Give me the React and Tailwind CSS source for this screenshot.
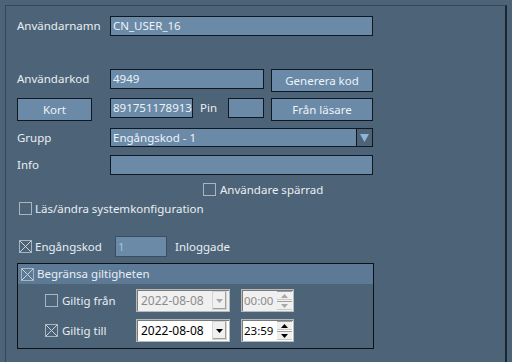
import React from 'react';

const Check = ({ checked }) => (
  <span className="relative block w-[13px] h-[13px] border border-[#a9b5c0] shrink-0">
    {checked && (
      <svg className="absolute inset-0" width="11" height="11" viewBox="0 0 11 11">
        <path d="M0 0L11 11M11 0L0 11" stroke="#c9d3dc" strokeWidth="1" />
      </svg>
    )}
  </span>
);

const Field = ({ className = '', children }) => (
  <div className={`h-[20px] border border-[#111820] bg-[#6a8aa7] text-[#eef3f7] px-[2px] flex items-center leading-none ${className}`}>
    {children}
  </div>
);

const Btn = ({ className = '', children }) => (
  <div className={`h-[23px] border border-[#111820] bg-[#6a8aa7] text-[#eef3f7] flex items-center justify-center leading-none ${className}`}>
    {children}
  </div>
);

const Arrow = ({ color, up }) => (
  <svg width="7" height="4" viewBox="0 0 7 4">
    <path d={up ? 'M3.5 0L7 4H0z' : 'M0 0h7L3.5 4z'} fill={color} />
  </svg>
);

const DatePick = ({ value, disabled }) => (
  <div className={`w-[94px] h-[23px] border border-[#b9b9b9] shadow-[inset_1px_1px_0_#7a7a7a] flex items-center pl-[4px] pr-[2px] ${disabled ? 'bg-[#f0f0f0] text-[#8c8c8c]' : 'bg-white text-black'}`}>
    <span className="flex-1 text-[12px] leading-none">{value}</span>
    <div className="w-[15px] h-[19px] bg-[#f0f0f0] border border-[#d4d4d4] shadow-[inset_-1px_-1px_0_#a0a0a0] flex items-center justify-center">
      <Arrow color={disabled ? '#a8a8a8' : '#000'} />
    </div>
  </div>
);

const TimePick = ({ value, disabled }) => (
  <div className={`w-[53px] h-[23px] border border-[#b9b9b9] shadow-[inset_1px_1px_0_#7a7a7a] flex items-center pl-[2px] pr-[1px] ${disabled ? 'bg-[#f0f0f0] text-[#8c8c8c]' : 'bg-white text-black'}`}>
    <span className="flex-1 text-[11.5px] leading-none">{value}</span>
    <div className="w-[15px] flex flex-col gap-[1px]">
      <div className="h-[9px] bg-[#f0f0f0] border-t border-[#a0a0a0] shadow-[inset_0_-1px_0_#c8c8c8] flex items-center justify-center">
        <Arrow color={disabled ? '#a8a8a8' : '#000'} up />
      </div>
      <div className="h-[9px] bg-[#f0f0f0] border-t border-[#a0a0a0] shadow-[inset_0_-1px_0_#c8c8c8] flex items-center justify-center">
        <Arrow color={disabled ? '#a8a8a8' : '#000'} />
      </div>
    </div>
  </div>
);

export default function App() {
  return (
    <div className="w-[512px] h-[362px] overflow-hidden bg-[#4d6478] pt-[5px] pl-[5px] font-['Noto_Sans',sans-serif] text-[11.5px] text-[#e9eef3]">
      <div className="w-[502px] h-[370px] border-t border-l border-[#34475a] border-r-2 border-r-[#1b2631] pl-[11px] flex flex-col">
        {/* Användarnamn */}
        <div className="mt-[10px] h-[20px] flex items-center">
          <span className="w-[93px]">Användarnamn</span>
          <Field className="w-[263px]">CN_USER_16</Field>
        </div>

        {/* Användarkod */}
        <div className="mt-[33px] h-[23px] flex items-start">
          <span className="w-[93px] h-[20px] flex items-center">Användarkod</span>
          <Field className="w-[154px]">4949</Field>
          <Btn className="ml-[7px] w-[102px]">Generera kod</Btn>
        </div>

        {/* Kort */}
        <div className="mt-[6px] h-[23px] flex items-start">
          <Btn className="w-[75px]">Kort</Btn>
          <Field className="ml-[18px] w-[83px] px-[1px] overflow-hidden">891751178913</Field>
          <span className="ml-[7px] w-[28px] h-[20px] flex items-center">Pin</span>
          <Field className="w-[36px]" />
          <Btn className="ml-[7px] w-[102px]">Från läsare</Btn>
        </div>

        {/* Grupp */}
        <div className="mt-[7px] h-[19px] flex items-center">
          <span className="w-[93px]">Grupp</span>
          <div className="w-[263px] h-[19px] border border-[#111820] bg-[#6a8aa7] flex">
            <span className="flex-1 px-[2px] flex items-center leading-none text-[#eef3f7]">Engångskod - 1</span>
            <div className="w-[16px] border-l border-[#111820] bg-[#4d6478] flex items-center justify-center">
              <svg width="9" height="8" viewBox="0 0 9 8">
                <path d="M0 0h9L4.5 8z" fill="#8fb4d8" />
              </svg>
            </div>
          </div>
        </div>

        {/* Info */}
        <div className="mt-[8px] h-[19px] flex items-center">
          <span className="w-[93px]">Info</span>
          <Field className="w-[263px] h-[19px]" />
        </div>

        {/* Användare spärrad */}
        <div className="mt-[9px] h-[13px] flex items-center pl-[186px] gap-[4px]">
          <Check />
          <span className="leading-none">Användare spärrad</span>
        </div>

        {/* Läs/ändra */}
        <div className="mt-[6px] h-[13px] flex items-center pl-[2px] gap-[3px]">
          <Check />
          <span className="leading-none">Läs/ändra systemkonfiguration</span>
        </div>

        {/* Engångskod */}
        <div className="mt-[21px] h-[21px] flex items-center">
          <div className="w-[98px] flex items-center pl-[2px] gap-[3px]">
            <Check checked />
            <span className="leading-none">Engångskod</span>
          </div>
          <div className="w-[52px] h-[21px] border border-[#3a4e60] bg-[#6a8aa7] text-[#a9c1d6] px-[2px] flex items-center leading-none">1</div>
          <span className="ml-[8px] leading-none">Inloggade</span>
        </div>

        {/* Begränsa giltigheten */}
        <div className="mt-[6px] w-[357px] h-[86px] border border-[#0d1117] flex flex-col">
          <div className="h-[20px] bg-[#5c7a96] flex items-center pl-[3px] gap-[3px]">
            <Check checked />
            <span className="leading-none">Begränsa giltigheten</span>
          </div>
          <div className="mt-[5px] h-[23px] flex items-center">
            <div className="w-[118px] pl-[27px] flex items-center gap-[4px]">
              <Check />
              <span className="leading-none">Giltig från</span>
            </div>
            <DatePick value="2022-08-08" disabled />
            <div className="ml-[11px]">
              <TimePick value="00:00" disabled />
            </div>
          </div>
          <div className="mt-[7px] h-[23px] flex items-center">
            <div className="w-[118px] pl-[27px] flex items-center gap-[4px]">
              <Check checked />
              <span className="leading-none">Giltig till</span>
            </div>
            <DatePick value="2022-08-08" />
            <div className="ml-[11px]">
              <TimePick value="23:59" />
            </div>
          </div>
        </div>
      </div>
    </div>
  );
}
